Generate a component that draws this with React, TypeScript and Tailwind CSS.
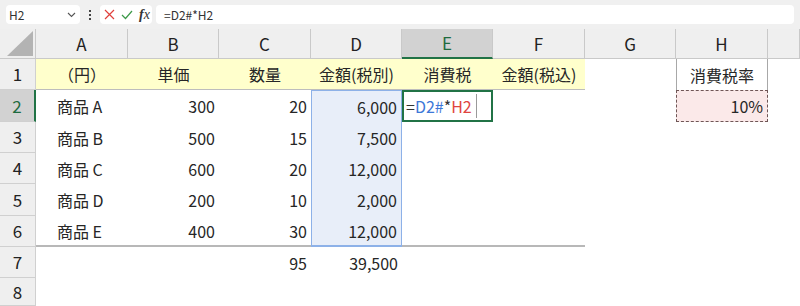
import React from "react";

const FONT = { fontFamily: '"Noto Sans CJK JP", "Noto Sans", sans-serif' };

const cols = ["A", "B", "C", "D", "E", "F", "G", "H", ""];

type Row = { num: number; h: string; cells: React.ReactNode[] };

const rows: Row[] = [
    { num: 1, h: "h-[31px]", cells: ["（円）", "単価", "数量", "金額(税別)", "消費税", "金額(税込)", "", "消費税率", ""] },
    { num: 2, h: "h-[32px]", cells: ["商品 A", "300", "20", "6,000", "", "", "", "10%", ""] },
    { num: 3, h: "h-[31px]", cells: ["商品 B", "500", "15", "7,500", "", "", "", "", ""] },
    { num: 4, h: "h-[31px]", cells: ["商品 C", "600", "20", "12,000", "", "", "", "", ""] },
    { num: 5, h: "h-[32px]", cells: ["商品 D", "200", "10", "2,000", "", "", "", "", ""] },
    { num: 6, h: "h-[31px]", cells: ["商品 E", "400", "30", "12,000", "", "", "", "", ""] },
    { num: 7, h: "h-[31px]", cells: ["", "", "95", "39,500", "", "", "", "", ""] },
    { num: 8, h: "h-[28px]", cells: ["", "", "", "", "", "", "", "", ""] },
];

const cellClass = (r: number, c: number) => {
    let cls = "flex items-center text-[16px] text-[#262626]";
    // alignment
    if (r === 1) cls += " justify-center";
    else if (c === 0) cls += " pl-[21px]";
    else cls += " justify-end pr-[4px]";

    if (r === 1 && c <= 5) cls += " bg-[#ffffcc] border-b border-[#bdbdbd]";
    if (r === 1 && c === 7) cls += " border-x border-[#a8a8a8]";
    if (r === 6 && c <= 5) cls += " border-b-2 border-[#b8b8b8]";
    if (c === 3 && r >= 2 && r <= 6) {
        cls += " bg-[#e8eef9] border-x border-x-[#8db1e8]";
        if (r === 2) cls += " border-t border-t-[#8db1e8]";
        if (r === 6) cls += " border-b-2 border-b-[#8db1e8]";
    }
    if (r === 2 && c === 7) cls += " bg-[#fbe9e9] border border-dashed border-[#6f5656]";
    return cls;
};

const FormulaBar = () => (
    <div className="flex h-[29px] items-start gap-[4px] bg-[#f0f0f0] px-[6px] pt-[5px]">
        <div className="flex h-[19px] w-[74px] items-center justify-between rounded-[4px] bg-white pl-[3px] pr-[4px] text-[12px] text-[#333]">
            <span>H2</span>
            <svg width="9" height="6" viewBox="0 0 9 6">
                <path d="M1 1l3.5 3.5L8 1" fill="none" stroke="#555" strokeWidth="1.1" />
            </svg>
        </div>
        <div className="flex h-[19px] w-[12px] flex-col items-center justify-center gap-[2px]">
            <span className="h-[2px] w-[2px] bg-[#444]" />
            <span className="h-[2px] w-[2px] bg-[#444]" />
            <span className="h-[2px] w-[2px] bg-[#444]" />
        </div>
        <div className="flex h-[19px] w-[52px] items-center gap-[6px] rounded-[4px] bg-white pl-[4px]">
            <svg width="11" height="11" viewBox="0 0 11 11">
                <path d="M1 1l9 9M10 1l-9 9" stroke="#e0403c" strokeWidth="1.2" />
            </svg>
            <svg width="12" height="10" viewBox="0 0 12 10">
                <path d="M1 5l3.5 3.5L11 1" fill="none" stroke="#3d9a4a" strokeWidth="1.2" />
            </svg>
            <span className="text-[14px] italic leading-none text-[#333]" style={{ fontFamily: '"Liberation Serif", serif' }}>
                <b>f</b>x
            </span>
        </div>
        <div className="flex h-[19px] flex-1 items-center rounded-[4px] bg-white pl-[8px] text-[12px] text-[#333]">
            =D2#*H2
        </div>
    </div>
);

const App = () => {
    const widths = "grid-cols-[36px_92px_91px_92px_91px_91px_92px_91px_92px_1fr]";
    return (
        <div className="h-[306px] w-[800px] overflow-hidden bg-white" style={FONT}>
            <FormulaBar />
            <div className={`grid ${widths}`}>
                {/* corner */}
                <div className="flex h-[30px] items-end justify-end border-b border-r border-[#c9c9c9] bg-[#efefef] pb-[2px] pr-[2px]">
                    <svg width="26" height="25" viewBox="0 0 26 25">
                        <path d="M26 0V25H0Z" fill="#b3b3b3" />
                    </svg>
                </div>
                {cols.map((c, i) => (
                    <div
                        key={c + i}
                        className={
                            i === 4
                                ? "flex h-[30px] items-center justify-center border-b-2 border-r border-b-[#217346] border-r-[#c9c9c9] bg-[#d2d2d2] text-[17px] text-[#1e6b3f]"
                                : "flex h-[30px] items-center justify-center border-b border-r border-[#c9c9c9] bg-[#efefef] text-[17px] text-[#222]"
                        }
                    >
                        {c}
                    </div>
                ))}
                {rows.map((row) => (
                    <React.Fragment key={row.num}>
                        <div
                            className={
                                row.num === 2
                                    ? `flex ${row.h} items-center justify-center border-b border-r-2 border-b-[#d0d0d0] border-r-[#217346] bg-[#d2d2d2] text-[17px] text-[#1e6b3f]`
                                    : `flex ${row.h} items-center justify-center border-b border-r border-[#d0d0d0] bg-[#efefef] text-[17px] text-[#222]`
                            }
                        >
                            {row.num}
                        </div>
                        {row.cells.map((v, c) =>
                            row.num === 2 && c === 4 ? (
                                <div
                                    key={c}
                                    className="flex items-center border-2 border-[#217346] pl-[2px] text-[16px]"
                                >
                                    <span className="text-[#333]">=</span>
                                    <span className="text-[#3d78d8]">D2#</span>
                                    <span className="text-[#333]">*</span>
                                    <span className="text-[#e0443e]">H2</span>
                                    <span className="ml-[4px] h-[24px] w-[1px] bg-[#9a9a9a]" />
                                </div>
                            ) : (
                                <div key={c} className={cellClass(row.num, c)}>
                                    {v}
                                </div>
                            )
                        )}
                    </React.Fragment>
                ))}
            </div>
        </div>
    );
};

export default App;
